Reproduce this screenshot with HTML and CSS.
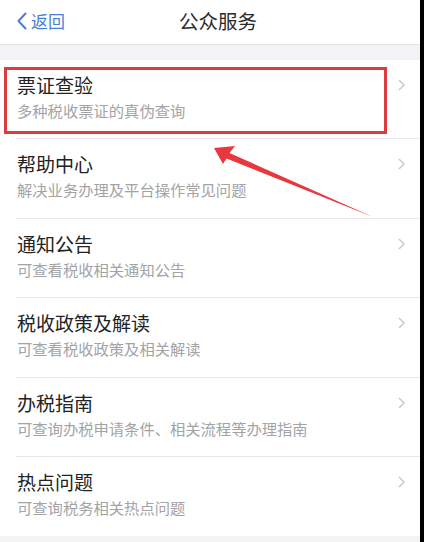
FILE: index.html
```html
<!DOCTYPE html>
<html lang="zh-CN">
<head>
<meta charset="utf-8">
<title>公众服务</title>
<link rel="stylesheet" href="styles.css">
</head>
<body>
<div class="screen">
  <header class="nav">
    <div class="back">
      <svg class="back-icon" width="12" height="18" viewBox="0 0 12 18"><path d="M9.5 1.5 L2.5 9 L9.5 16.5" fill="none" stroke="#4a7fd4" stroke-width="2" stroke-linecap="round" stroke-linejoin="round"/></svg>
      <span>返回</span>
    </div>
    <h1 class="nav-title">公众服务</h1>
    <div class="nav-spacer"></div>
  </header>
  <div class="gap"></div>
  <ul class="list">
    <li class="item"><div class="item-body"><div class="texts"><div class="title">票证查验</div><div class="sub">多种税收票证的真伪查询</div></div><svg class="chev" width="7" height="12" viewBox="0 0 7 12"><path d="M1 1 L6 6 L1 11" fill="none" stroke="#c9c9ce" stroke-width="1.5"/></svg></div></li>
    <li class="item"><div class="item-body"><div class="texts"><div class="title">帮助中心</div><div class="sub">解决业务办理及平台操作常见问题</div></div><svg class="chev" width="7" height="12" viewBox="0 0 7 12"><path d="M1 1 L6 6 L1 11" fill="none" stroke="#c9c9ce" stroke-width="1.5"/></svg></div></li>
    <li class="item"><div class="item-body"><div class="texts"><div class="title">通知公告</div><div class="sub">可查看税收相关通知公告</div></div><svg class="chev" width="7" height="12" viewBox="0 0 7 12"><path d="M1 1 L6 6 L1 11" fill="none" stroke="#c9c9ce" stroke-width="1.5"/></svg></div></li>
    <li class="item"><div class="item-body"><div class="texts"><div class="title">税收政策及解读</div><div class="sub">可查看税收政策及相关解读</div></div><svg class="chev" width="7" height="12" viewBox="0 0 7 12"><path d="M1 1 L6 6 L1 11" fill="none" stroke="#c9c9ce" stroke-width="1.5"/></svg></div></li>
    <li class="item"><div class="item-body"><div class="texts"><div class="title">办税指南</div><div class="sub">可查询办税申请条件、相关流程等办理指南</div></div><svg class="chev" width="7" height="12" viewBox="0 0 7 12"><path d="M1 1 L6 6 L1 11" fill="none" stroke="#c9c9ce" stroke-width="1.5"/></svg></div></li>
    <li class="item last"><div class="item-body"><div class="texts"><div class="title">热点问题</div><div class="sub">可查询税务相关热点问题</div></div><svg class="chev" width="7" height="12" viewBox="0 0 7 12"><path d="M1 1 L6 6 L1 11" fill="none" stroke="#c9c9ce" stroke-width="1.5"/></svg></div></li>
  </ul>
  <div class="highlight"></div>
  <svg class="arrow" width="420" height="542" viewBox="0 0 420 542"><polygon points="214,148 235,146 229.5,153 373,217 226.5,158.5 223,164" fill="#e8383d"/></svg>
</div>
</body>
</html>
```
FILE: styles.css
```css
* { box-sizing: border-box; }
html, body { margin: 0; padding: 0; }
body {
  background: #000;
  font-family: "Noto Sans CJK SC", "Noto Sans", sans-serif;
  width: 424px;
  height: 542px;
  overflow: hidden;
}
.screen {
  position: relative;
  width: 420px;
  height: 542px;
  background: #f3f3f5;
  overflow: hidden;
}
.nav {
  height: 45px;
  background: #fff;
  border-bottom: 1px solid #e4e4e6;
  display: flex;
  align-items: center;
  justify-content: space-between;
  padding: 0 0 2px 16px;
}
.back {
  width: 90px;
  display: flex;
  align-items: center;
  gap: 3px;
  color: #4a7fd4;
  font-size: 17px;
  line-height: 20px;
}
.back-icon { display: block; }
.nav-title {
  margin: 0;
  font-size: 19.5px;
  font-weight: 400;
  color: #2a2a2a;
  line-height: 24px;
}
.nav-spacer { width: 90px; }
.gap { height: 15px; }
.list {
  list-style: none;
  margin: 0;
  padding: 0;
  background: #fff;
}
.item {
  height: 79.4px;
  padding-left: 16px;
}
.item-body {
  height: 100%;
  border-bottom: 1px solid #e8e8ea;
  display: flex;
  align-items: flex-start;
  justify-content: space-between;
  padding: 13px 15px 0 1px;
}
.item.last .item-body { border-bottom: none; }
.title {
  font-size: 19px;
  line-height: 24px;
  color: #222;
}
.sub {
  margin-top: 3px;
  font-size: 15.3px;
  line-height: 20px;
  color: #a3a3a6;
}
.chev {
  display: block;
  margin-top: 6px;
}
.highlight {
  position: absolute;
  left: 4px;
  top: 67px;
  width: 383px;
  height: 67px;
  border: 3px solid #dd3b42;
}
.arrow {
  position: absolute;
  left: 0;
  top: 0;
}
```
